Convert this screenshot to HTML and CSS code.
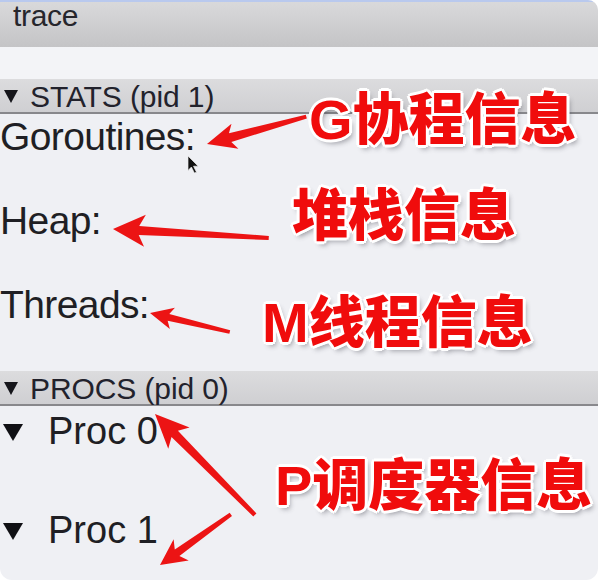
FILE: index.html
```html
<!DOCTYPE html>
<html lang="zh-CN">
<head>
<meta charset="utf-8">
<title>trace</title>
<link rel="stylesheet" href="styles.css">
</head>
<body>
<div class="frame">
  <div class="titlebar">trace</div>
  <div class="gap"></div>
  <div class="section-head"><span class="tri-sm"></span><span>STATS (pid 1)</span></div>
  <div class="stats">
    <div class="stat">Goroutines:</div>
    <div class="stat">Heap:</div>
    <div class="stat">Threads:</div>
  </div>
  <div class="section-head"><span class="tri-sm"></span><span>PROCS (pid 0)</span></div>
  <div class="procs">
    <div class="proc"><span class="tri-lg"></span><span>Proc 0</span></div>
    <div class="proc"><span class="tri-lg"></span><span>Proc 1</span></div>
  </div>

  <svg class="overlay" width="598" height="580" viewBox="0 0 598 580" xmlns="http://www.w3.org/2000/svg">
    <g fill="#ec1414">
      <!-- Goroutines arrow -->
      <path transform="translate(207 144) rotate(-15.4)" d="M0 0 L29 -13 L24 -4.5 L103 -2 L103 2 L24 4.5 L29 13 Z"/>
      <!-- Heap arrow -->
      <path transform="translate(113 229) rotate(3.3)" d="M0 0 L32 -16 L26 -4.5 L156 -2 L156 2 L26 4.5 L32 16 Z"/>
      <!-- Threads arrow -->
      <path transform="translate(150 313) rotate(13.4)" d="M0 0 L23 -11 L19 -3.5 L82 -1.8 L82 1.8 L19 3.5 L23 11 Z"/>
      <!-- PROCS arrow -->
      <path transform="translate(155 414) rotate(45.3)" d="M0 0 L34 -15 L28 -4.5 L142 -2.2 L142 2.2 L28 4.5 L34 15 Z"/>
      <!-- Proc 1 arrow -->
      <path transform="translate(160 565) rotate(-35.5)" d="M0 0 L26 -13 L21 -4 L87 -2 L87 2 L21 4 L26 13 Z"/>
    </g>
    <!-- mouse cursor -->
    <path transform="translate(188 156) scale(0.85)" d="M0 0 L0 17 L4 13 L7.5 20 L10 19 L6.5 12 L12 12 Z" fill="#111" stroke="#eee" stroke-width="0.8"/>
  </svg>

  <div class="note note-g">G协程信息</div>
  <div class="note note-heap">堆栈信息</div>
  <div class="note note-m">M线程信息</div>
  <div class="note note-p">P调度器信息</div>
</div>
</body>
</html>
```

FILE: styles.css
```css
html, body {
  margin: 0;
  padding: 0;
  background: #ffffff;
}

.frame {
  position: relative;
  width: 598px;
  height: 580px;
  overflow: hidden;
  border-radius: 0 10px 12px 12px;
  background: #eff0f4;
  font-family: "Liberation Sans", Arial, "Noto Sans CJK SC", sans-serif;
  color: #1f1f24;
}

.titlebar {
  height: 45px;
  border-top: 2px solid #b9c9ee;
  background: linear-gradient(#d9d9db, #c4c4c6);
  padding-left: 13px;
  font-size: 30px;
  line-height: 28px;
  letter-spacing: -0.3px;
  color: #26262c;
}

.gap {
  height: 32px;
  background: #f3f4f7;
}

.section-head {
  height: 33px;
  border-bottom: 2px solid #88888c;
  background: linear-gradient(#dcdcde, #cfcfd2);
  display: flex;
  align-items: flex-start;
  gap: 12px;
  padding-left: 4px;
  font-size: 30px;
  line-height: 36px;
  letter-spacing: -0.1px;
  color: #22222c;
}

.tri-sm {
  width: 0;
  height: 0;
  margin-top: 11px;
  border-left: 7.5px solid transparent;
  border-right: 7.5px solid transparent;
  border-top: 13px solid #15151a;
}

.stats {
  height: 257px;
  box-sizing: border-box;
  padding-top: 3px;
  display: flex;
  flex-direction: column;
  gap: 44px;
}

.stat {
  height: 40px;
  font-size: 39px;
  line-height: 40px;
  letter-spacing: -0.6px;
  white-space: nowrap;
}

.procs {
  padding-top: 5px;
  display: flex;
  flex-direction: column;
  gap: 59px;
}

.proc {
  height: 40px;
  display: flex;
  align-items: center;
  gap: 25px;
  padding-left: 3px;
  font-size: 38px;
  line-height: 40px;
  white-space: nowrap;
}

.tri-lg {
  width: 0;
  height: 0;
  margin-top: 3px;
  border-left: 10px solid transparent;
  border-right: 10px solid transparent;
  border-top: 17px solid #101014;
}

.overlay {
  position: absolute;
  left: 0;
  top: 0;
  pointer-events: none;
}

.note {
  position: absolute;
  font-family: "Liberation Sans", "Noto Sans CJK SC", sans-serif;
  font-weight: 900;
  font-size: 56px;
  line-height: 56px;
  color: #f00c0c;
  white-space: nowrap;
  text-shadow:
    3px 0 0 #fff, -3px 0 0 #fff, 0 3px 0 #fff, 0 -3px 0 #fff,
    2px 2px 0 #fff, -2px 2px 0 #fff, 2px -2px 0 #fff, -2px -2px 0 #fff,
    3px 4px 5px rgba(60, 60, 70, 0.45);
}

.note-g { left: 309px; top: 92px; }
.note-heap { left: 292px; top: 188px; }
.note-m { left: 262px; top: 295px; }
.note-p { left: 275px; top: 458px; }
```
